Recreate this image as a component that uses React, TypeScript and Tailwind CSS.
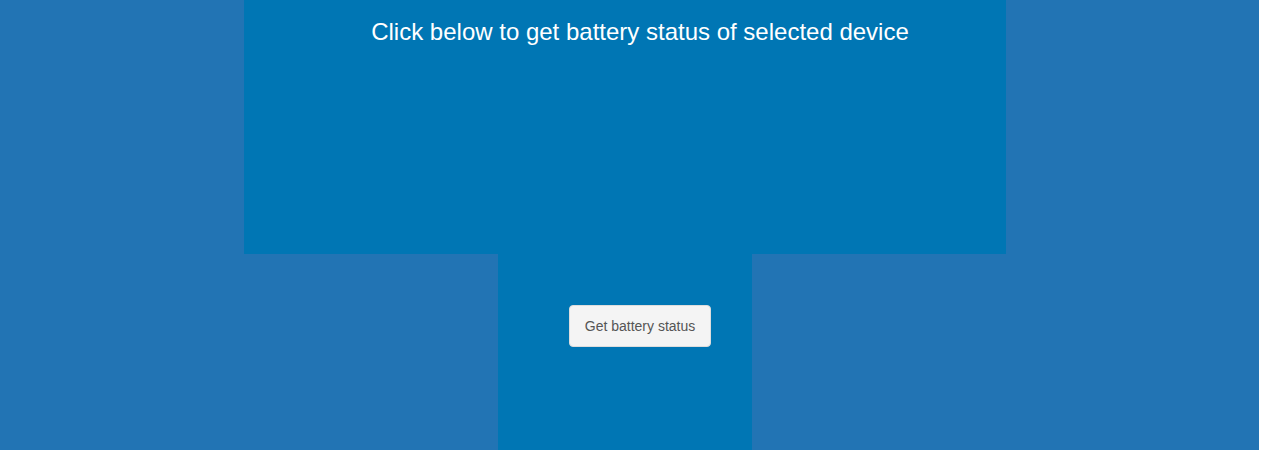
export default function App() {
  return (
    <div className="w-[1259px] h-[450px] bg-[#2274b4] flex flex-col overflow-hidden" style={{ fontFamily: '"Liberation Sans", Arial, sans-serif' }}>
      <div className="ml-[244px] w-[762px] h-[254px] shrink-0 bg-[#0076b4] pl-[30px] pt-[18px]">
        <h1 className="text-center text-white text-[24px] leading-[28px] font-normal">
          Click below to get battery status of selected device
        </h1>
      </div>
      <div className="ml-[498px] w-[254px] flex-1 bg-[#0076b4] pl-[30px] pt-[51px] flex justify-center items-start">
        <button className="bg-[#f4f4f4] border border-[#dddddd] rounded-[4px] px-[15px] py-[10px] text-[14px] leading-[20px] text-[#555555]">
          Get battery status
        </button>
      </div>
    </div>
  );
}
